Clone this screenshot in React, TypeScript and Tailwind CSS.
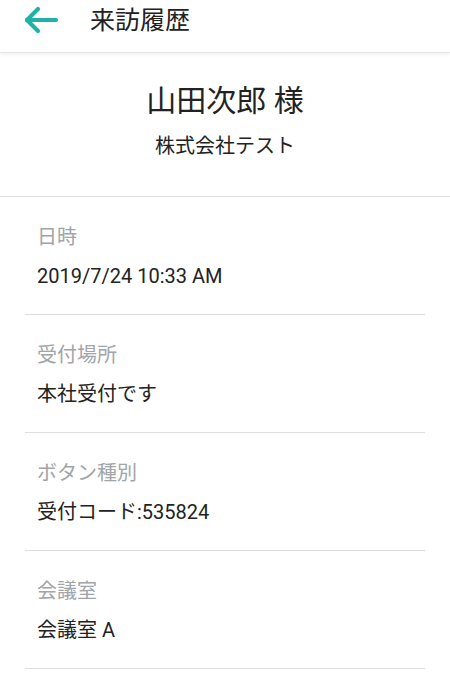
const fontStack = 'font-["Roboto","Noto_Sans_CJK_JP",sans-serif]';

const rows: { label: string; value: string }[] = [
  { label: '日時', value: '2019/7/24 10:33 AM' },
  { label: '受付場所', value: '本社受付です' },
  { label: 'ボタン種別', value: '受付コード:535824' },
  { label: '会議室', value: '会議室 A' },
];

export default function App() {
  return (
    <div className={`min-h-[673px] w-full bg-white ${fontStack} text-[#222]`}>
      {/* app bar */}
      <header className="flex h-[53px] items-start border-b border-[#e4e4e4] shadow-[0_2px_3px_rgba(0,0,0,0.05)]">
        <div className="flex h-10 items-center">
          <svg
            viewBox="0 0 40 30"
            className="ml-[22px] h-[30px] w-10"
            fill="none"
            stroke="#1fb3a8"
            strokeWidth="4.2"
            strokeLinecap="round"
            strokeLinejoin="round"
            aria-hidden="true"
          >
            <path d="M5 15h29" />
            <path d="M16 4 5 15l11 11" />
          </svg>
          <h1 className="ml-[28px] text-[25px] leading-none">来訪履歴</h1>
        </div>
      </header>

      {/* visitor */}
      <section className="flex flex-col items-center gap-[12px] border-b border-[#dedede] pt-[29px] pb-[36px]">
        <div className="text-[30px] leading-[38px]">山田次郎 様</div>
        <div className="text-[20px] leading-[28px]">株式会社テスト</div>
      </section>

      {/* details */}
      <div className="flex flex-col">
        {rows.map((row) => (
          <div
            key={row.label}
            className="mx-[25px] flex flex-col gap-[11px] border-b border-[#dedede] pt-[26px] pb-[24px] pl-3"
          >
            <div className="text-[20px] leading-[28px] text-[#a1a4a8]">{row.label}</div>
            <div className="text-[20px] leading-[28px]">{row.value}</div>
          </div>
        ))}
      </div>
    </div>
  );
}
